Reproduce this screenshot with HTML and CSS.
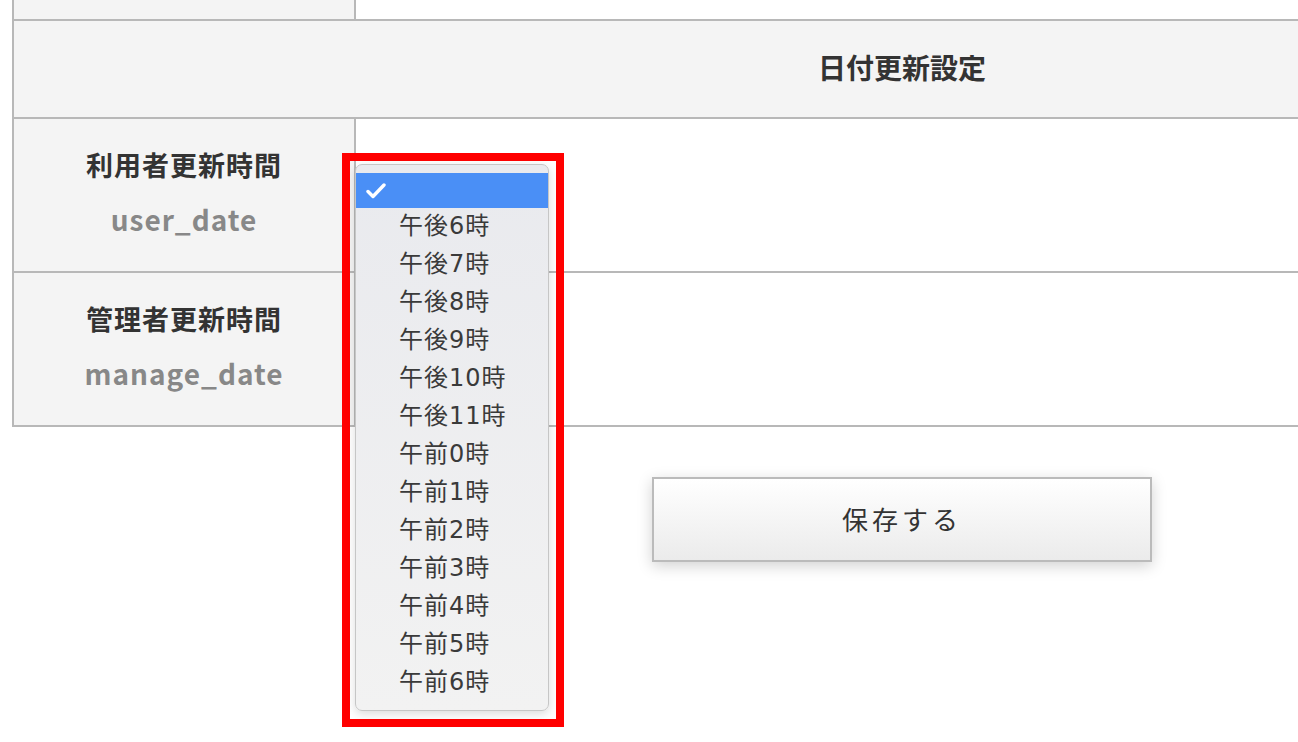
FILE: index.html
```html
<!DOCTYPE html>
<html lang="ja">
<head>
  <meta charset="UTF-8" />
  <meta name="viewport" content="width=device-width, initial-scale=1.0"/>
  <title>日付更新設定</title>
  <link rel="stylesheet" href="styles.css">
</head>
<body>
  <div class="page">
    <table class="settings">
      <tr class="cut-row">
        <th></th>
        <td></td>
      </tr>
      <tr>
        <th class="section" colspan="2">日付更新設定</th>
      </tr>
      <tr class="field-row">
        <th>
          <div class="label">利用者更新時間</div>
          <div class="key">user_date</div>
        </th>
        <td></td>
      </tr>
      <tr class="field-row">
        <th>
          <div class="label">管理者更新時間</div>
          <div class="key">manage_date</div>
        </th>
        <td></td>
      </tr>
    </table>

    <div class="actions">
      <button class="save-btn">保存する</button>
    </div>

    <!-- geoeffnetes Auswahlmenue, rot markiert -->
    <div class="picker-mark">
      <ul class="picker">
        <li class="selected">
          <svg class="check" width="20" height="16" viewBox="0 0 20 16">
            <polyline points="2,8.5 7,13.5 18,2" fill="none" stroke="#fff" stroke-width="3.4" stroke-linecap="round" stroke-linejoin="round"/>
          </svg>
        </li>
        <li>午後6時</li>
        <li>午後7時</li>
        <li>午後8時</li>
        <li>午後9時</li>
        <li>午後10時</li>
        <li>午後11時</li>
        <li>午前0時</li>
        <li>午前1時</li>
        <li>午前2時</li>
        <li>午前3時</li>
        <li>午前4時</li>
        <li>午前5時</li>
        <li>午前6時</li>
      </ul>
    </div>
  </div>
</body>
</html>
```

FILE: styles.css
```css
* {
  box-sizing: border-box;
}
html {
  overflow: hidden;
}
body {
  margin: 0;
  padding: 0;
  height: 742px;
  background: #fff;
  color: #333;
  font-family: "Noto Sans CJK JP", "Noto Sans", sans-serif;
}
.page {
  position: relative;
  width: 1780px;
  margin-left: 12px;
}
.settings {
  width: 1780px;
  border-collapse: collapse;
  table-layout: fixed;
  border-left: 2px solid #b8b8b8;
}
.settings th,
.settings td {
  border: 2px solid #b8b8b8;
  padding: 0;
}
.settings th {
  width: 342px;
  background: #f4f4f4;
  text-align: center;
}
.settings td {
  background: #fff;
}
.cut-row th,
.cut-row td {
  border-top: none;
  height: 20px;
}
.settings .section {
  width: auto;
  height: 98px;
  padding: 0 0 5px 0;
  font-size: 28px;
  font-weight: bold;
  color: #333;
}
.field-row th,
.field-row td {
  height: 154px;
}
.field-row th {
  padding-bottom: 5px;
}
.label {
  font-size: 27px;
  font-weight: bold;
  letter-spacing: 1px;
  color: #333;
  line-height: 1.3;
}
.key {
  margin-top: 19px;
  font-size: 28px;
  font-weight: bold;
  letter-spacing: 1px;
  color: #888;
  line-height: 1.3;
}
.actions {
  display: flex;
  justify-content: center;
  margin-top: 50px;
}
.save-btn {
  width: 500px;
  height: 85px;
  padding-bottom: 4px;
  border: 2px solid #bbb;
  background: linear-gradient(#fff, #ebebeb);
  box-shadow: 0 4px 14px rgba(0, 0, 0, 0.18);
  font-family: inherit;
  font-size: 26px;
  letter-spacing: 4px;
  color: #333;
}
.picker-mark {
  position: absolute;
  left: 330px;
  top: 153px;
  width: 222px;
  height: 574px;
  border: 8px solid #f00;
  padding: 3px 7px 8px 5px;
}
.picker {
  margin: 0;
  padding: 8px 0 8px 0;
  list-style: none;
  height: 100%;
  border: 1px solid #c6c6c6;
  border-radius: 7px;
  background: linear-gradient(#e9eaee, #f2f2f2);
  box-shadow: 0 3px 10px rgba(0, 0, 0, 0.14);
}
.picker li {
  height: 38px;
  line-height: 37px;
  padding-left: 43px;
  font-family: "DejaVu Sans", "Noto Sans CJK JP", sans-serif;
  font-size: 24px;
  letter-spacing: 1px;
  color: #3a3a3a;
}
.picker .selected {
  height: 35px;
  padding-left: 10px;
  background: #4a8ff6;
  display: flex;
  align-items: center;
}
```
